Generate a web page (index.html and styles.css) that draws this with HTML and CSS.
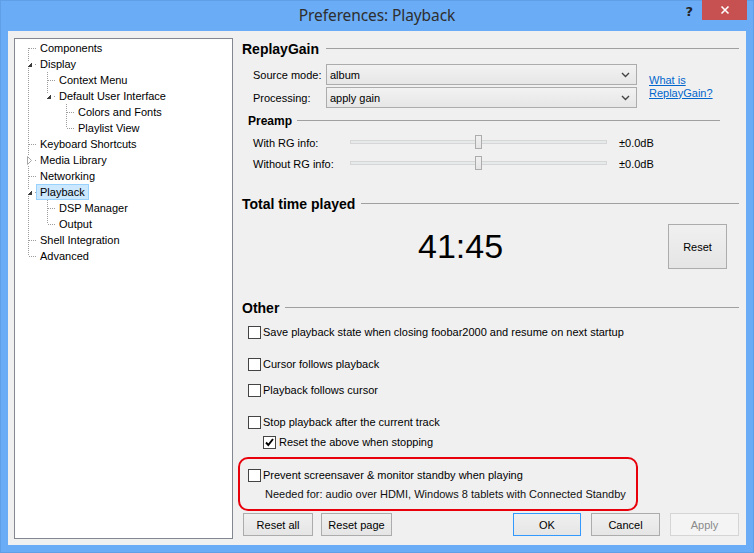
FILE: index.html
```html
<!DOCTYPE html>
<html>
<head>
<meta charset="utf-8">
<title>Preferences: Playback</title>
<link rel="stylesheet" href="styles.css">
</head>
<body>
<div class="window">
  <div class="titlebar">
    <div class="tb-left"></div>
    <div class="title">Preferences: Playback</div>
    <div class="tb-right">
      <span class="help">?</span>
      <span class="close"><svg width="10" height="10" viewBox="0 0 10 10"><path d="M1.5 1.5L8.5 8.5M8.5 1.5L1.5 8.5" stroke="#fff" stroke-width="1.6"/></svg></span>
    </div>
  </div>
  <div class="client">
    <div class="tree">
      <div class="row"><svg class="g0" width="21" height="16"><path class="dot" d="M13.5 8V16M14 8.5H21"/></svg><span class="lbl">Components</span></div>
      <div class="row"><svg class="g0" width="21" height="16"><path class="dot" d="M13.5 0V6M13.5 12V16M20 8.5H21"/><polygon class="exp" points="17,6 17,11 12,11"/></svg><span class="lbl">Display</span></div>
      <div class="row"><svg class="g1" width="40" height="16"><path class="dot" d="M13.5 0V16M32.5 0V16M33 8.5H40"/></svg><span class="lbl">Context Menu</span></div>
      <div class="row"><svg class="g1" width="40" height="16"><path class="dot" d="M13.5 0V16M32.5 0V6M39 8.5H40"/><polygon class="exp" points="36,6 36,11 31,11"/></svg><span class="lbl">Default User Interface</span></div>
      <div class="row"><svg class="g2" width="59" height="16"><path class="dot" d="M13.5 0V16M51.5 0V16M52 8.5H59"/></svg><span class="lbl">Colors and Fonts</span></div>
      <div class="row"><svg class="g2" width="59" height="16"><path class="dot" d="M13.5 0V16M51.5 0V8M52 8.5H59"/></svg><span class="lbl">Playlist View</span></div>
      <div class="row"><svg class="g0" width="21" height="16"><path class="dot" d="M13.5 0V16M14 8.5H21"/></svg><span class="lbl">Keyboard Shortcuts</span></div>
      <div class="row"><svg class="g0" width="21" height="16"><path class="dot" d="M13.5 0V4M13.5 14V16M20 8.5H21"/><polygon class="col" points="12.5,4.5 16.5,8.5 12.5,12.5"/></svg><span class="lbl">Media Library</span></div>
      <div class="row"><svg class="g0" width="21" height="16"><path class="dot" d="M13.5 0V16M14 8.5H21"/></svg><span class="lbl">Networking</span></div>
      <div class="row"><svg class="g0" width="21" height="16"><path class="dot" d="M13.5 0V6M13.5 12V16M20 8.5H21"/><polygon class="exp" points="17,6 17,11 12,11"/></svg><span class="lbl sel">Playback</span></div>
      <div class="row"><svg class="g1" width="40" height="16"><path class="dot" d="M13.5 0V16M32.5 0V16M33 8.5H40"/></svg><span class="lbl">DSP Manager</span></div>
      <div class="row"><svg class="g1" width="40" height="16"><path class="dot" d="M13.5 0V16M32.5 0V8M33 8.5H40"/></svg><span class="lbl">Output</span></div>
      <div class="row"><svg class="g0" width="21" height="16"><path class="dot" d="M13.5 0V16M14 8.5H21"/></svg><span class="lbl">Shell Integration</span></div>
      <div class="row"><svg class="g0" width="21" height="16"><path class="dot" d="M13.5 0V8M14 8.5H21"/></svg><span class="lbl">Advanced</span></div>
    </div>

    <div class="page">
      <div class="hd hd-rg">ReplayGain</div>

      <div class="rg-grid">
        <div class="lab">Source mode:</div>
        <div class="combo"><span>album</span><svg width="9" height="6" viewBox="0 0 9 6"><path d="M1 1L4.5 4.5L8 1" stroke="#444" stroke-width="1.4" fill="none"/></svg></div>
        <a class="link" href="#">What is<br>ReplayGain?</a>
        <div class="lab">Processing:</div>
        <div class="combo"><span>apply gain</span><svg width="9" height="6" viewBox="0 0 9 6"><path d="M1 1L4.5 4.5L8 1" stroke="#444" stroke-width="1.4" fill="none"/></svg></div>
      </div>

      <div class="hd hd-pre">Preamp</div>

      <div class="sl-grid">
        <div class="lab sl-lab">With RG info:</div>
        <div class="track"><span class="thumb"></span></div>
        <div class="val">±0.0dB</div>
        <div class="lab sl-lab">Without RG info:</div>
        <div class="track"><span class="thumb"></span></div>
        <div class="val">±0.0dB</div>
      </div>

      <div class="hd hd-total">Total time played</div>

      <div class="time-row">
        <div class="time">41:45</div>
        <div class="btn btn-reset">Reset</div>
      </div>

      <div class="hd hd-other">Other</div>

      <div class="cb cb-save"><span class="box"></span>Save playback state when closing foobar2000 and resume on next startup</div>
      <div class="cb cb-cursor"><span class="box"></span>Cursor follows playback</div>
      <div class="cb cb-follow"><span class="box"></span>Playback follows cursor</div>
      <div class="cb cb-stop"><span class="box"></span>Stop playback after the current track</div>
      <div class="cb cb-resetabove"><span class="box checked"><svg width="11" height="11" viewBox="0 0 11 11"><path d="M2 5.5L4.3 8L9 2" stroke="#000" stroke-width="1.9" fill="none"/></svg></span>Reset the above when stopping</div>

      <div class="redbox">
        <div class="cb cb-prevent"><span class="box"></span>Prevent screensaver &amp; monitor standby when playing</div>
        <div class="needed">Needed for: audio over HDMI, Windows 8 tablets with Connected Standby</div>
      </div>

      <div class="btn-row">
        <div class="btn b-resetall">Reset all</div>
        <div class="btn b-resetpage">Reset page</div>
        <div class="spacer"></div>
        <div class="btn b-ok">OK</div>
        <div class="btn b-cancel">Cancel</div>
        <div class="btn b-apply">Apply</div>
      </div>
    </div>
  </div>
</div>
</body>
</html>
```

FILE: styles.css
```css
html, body {
  margin: 0;
  padding: 0;
}
body {
  font-family: "Liberation Sans", Arial, sans-serif;
  font-size: 11px;
  color: #000;
  background: #6aacf5;
}
.window {
  width: 754px;
  height: 553px;
  background: #6aacf5;
  box-shadow: inset 0 0 0 1px #5f9fe8;
  overflow: hidden;
}

/* title bar */
.titlebar {
  height: 31px;
  display: grid;
  grid-template-columns: 1fr auto 1fr;
  align-items: start;
}
.title {
  font-family: "Noto Sans", "Open Sans", sans-serif;
  font-size: 15.5px;
  color: #2e2e2e;
  line-height: 31px;
  letter-spacing: -0.1px;
}
.tb-right {
  justify-self: end;
  display: flex;
  align-items: flex-start;
  margin-right: 7px;
}
.help {
  font-family: "DejaVu Sans", sans-serif;
  font-weight: bold;
  font-size: 13px;
  line-height: 18px;
  color: #222;
  margin-right: 9px;
  margin-top: 3px;
}
.close {
  width: 45px;
  height: 20px;
  background: #c75050;
  display: flex;
  align-items: center;
  justify-content: center;
}

/* client */
.client {
  margin: 0 8px;
  height: 514px;
  background: #f0f0f0;
  display: flex;
  padding: 7px 7px 6px 6px;
  box-sizing: border-box;
}
.tree {
  width: 219px;
  height: 501px;
  flex: none;
  box-sizing: border-box;
  border: 1px solid #828790;
  background: #fff;
  padding-top: 1px;
}
.row {
  display: flex;
  height: 16px;
  align-items: center;
}
.row svg {
  flex: none;
  shape-rendering: crispEdges;
}
.dot {
  stroke: #9c9c9c;
  stroke-width: 1;
  stroke-dasharray: 1 1;
  fill: none;
}
.exp {
  fill: #3c3c3c;
}
.col {
  fill: #fff;
  stroke: #a6a6a6;
  stroke-width: 1;
  shape-rendering: geometricPrecision;
}
.lbl {
  line-height: 14px;
  padding: 0 3px;
  border: 1px solid transparent;
  white-space: nowrap;
}
.lbl.sel {
  background: #cce8ff;
  border-color: #99d1ff;
}

/* right page */
.page {
  flex: 1;
  display: flex;
  flex-direction: column;
  min-width: 0;
}
.hd {
  display: flex;
  align-items: center;
  font-weight: bold;
  font-size: 14px;
  height: 18px;
  margin-left: 9px;
}
.hd::after {
  content: "";
  flex: 1;
  border-top: 1px solid #a0a0a0;
  margin-left: 6px;
  margin-top: -1px;
}
.hd-rg { margin-top: 2px; }
.hd-rg::after { margin-left: 7px; }
.hd-pre {
  font-size: 12px;
  height: 16px;
  margin-top: 5px;
  margin-left: 15px;
  margin-right: 19px;
}
.hd-pre::after { margin-left: 5px; }
.hd-total { margin-top: 22px; }
.hd-other { margin-top: 30px; }

.rg-grid {
  display: grid;
  grid-template-columns: 73px 311px auto;
  grid-template-rows: 21px 21px;
  row-gap: 2px;
  margin-top: 6px;
  margin-left: 20px;
  align-items: center;
}
.lab {
  white-space: nowrap;
}
.combo {
  height: 21px;
  box-sizing: border-box;
  border: 1px solid #acacac;
  background: linear-gradient(#f2f2f2, #e6e6e6);
  display: flex;
  align-items: center;
  justify-content: space-between;
  padding: 0 6px 0 3px;
}
.link {
  grid-column: 3;
  grid-row: 1 / span 2;
  color: #0066cc;
  text-decoration: underline;
  line-height: 13px;
  margin-left: 12px;
  padding-top: 1px;
}

.sl-grid {
  display: grid;
  grid-template-columns: 97px 257px auto;
  grid-template-rows: 21px 21px;
  margin-top: 2px;
  margin-left: 20px;
  align-items: center;
}
.sl-lab {
  padding-top: 3px;
}
.track {
  height: 4px;
  box-sizing: border-box;
  border: 1px solid #d6d6d6;
  background: #e7eaea;
  position: relative;
}
.thumb {
  position: absolute;
  left: 124px;
  top: -6px;
  width: 7px;
  height: 14px;
  box-sizing: border-box;
  border: 1px solid #acacac;
  background: linear-gradient(#f0f0f0, #e5e5e5);
}
.val {
  margin-left: 12px;
  padding-top: 3px;
}

.time-row {
  display: flex;
  align-items: center;
  margin-top: 11px;
  height: 45px;
}
.time {
  font-size: 34px;
  margin-left: 185px;
  line-height: 45px;
  color: #000;
}

.btn {
  height: 23px;
  box-sizing: border-box;
  border: 1px solid #acacac;
  background: linear-gradient(#f0f0f0, #e5e5e5);
  display: flex;
  align-items: center;
  justify-content: center;
  white-space: nowrap;
}
.btn-reset {
  width: 59px;
  height: 45px;
  margin-left: auto;
  margin-right: 12px;
}

.cb {
  display: flex;
  align-items: center;
  height: 16px;
  margin-left: 15px;
  white-space: nowrap;
}
.box {
  width: 13px;
  height: 13px;
  box-sizing: border-box;
  border: 1px solid #444;
  background: #fff;
  margin-right: 2px;
  flex: none;
  display: flex;
  align-items: center;
  justify-content: center;
}
.cb-save { margin-top: 7px; }
.cb-cursor { margin-top: 16px; }
.cb-follow { margin-top: 10px; }
.cb-stop { margin-top: 16px; }
.cb-resetabove {
  margin-top: 4px;
  margin-left: 30px;
}
.cb-resetabove .box { margin-right: 3px; }

.redbox {
  margin-top: 7px;
  margin-left: 5px;
  width: 400px;
  box-sizing: border-box;
  border: 2px solid #e8000b;
  border-radius: 10px;
  padding: 8px 0 7px 8px;
}
.cb-prevent { margin-left: 0; }
.needed {
  margin-top: 3px;
  margin-left: 17px;
  line-height: 16px;
  color: #101010;
}

.btn-row {
  display: flex;
  margin-top: 2px;
  margin-left: 10px;
  margin-right: 0;
}
.spacer { flex: 1; }
.b-resetall { width: 70px; }
.b-resetpage { width: 71px; margin-left: 8px; }
.b-ok { width: 68px; border-color: #3399ff; }
.b-cancel { width: 69px; margin-left: 10px; }
.b-apply {
  width: 69px;
  margin-left: 10px;
  color: #8a8a8a;
  border-color: #d5d5d5;
  background: #f4f4f4;
}
```
